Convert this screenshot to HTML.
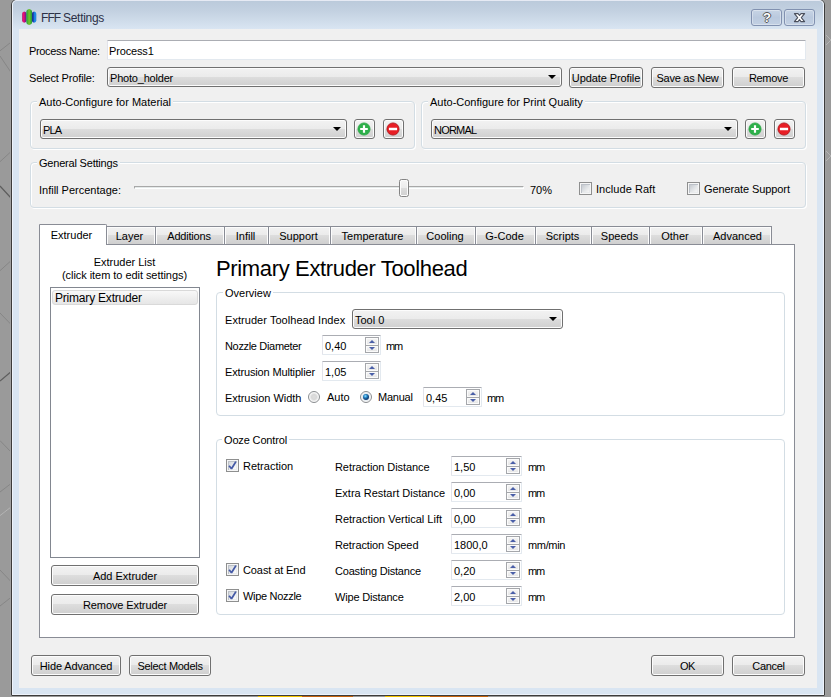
<!DOCTYPE html>
<html>
<head>
<meta charset="utf-8">
<title>FFF Settings</title>
<style>
html,body{margin:0;padding:0;}
body{width:831px;height:697px;overflow:hidden;background:#9a9a9a;position:relative;font-family:"Liberation Sans",sans-serif;font-size:11px;color:#000;line-height:13px;}
*{box-sizing:border-box;}
.a{position:absolute;white-space:nowrap;}
/* window frame */
#win{left:11px;top:-1px;width:814px;height:697px;border:1px solid #3c3c3c;border-radius:6px 6px 1px 1px;background:#d9e5f2;}
#winhl{left:12px;top:0;width:812px;height:695px;border:1px solid #eef3fb;border-top-color:#e6eaf4;border-radius:5px 5px 0 0;background:linear-gradient(#bbcadb 0px,#c3d1e1 10px,#cfdcea 20px,#d9e5f2 28px,#d9e5f2 100%);}
#content{left:19px;top:29px;width:798px;height:659px;background:#f0f0f0;}
#title{left:41px;top:11px;font-size:12px;line-height:14px;word-spacing:-0.6px;color:#2c3147;}
.cap{top:9px;height:17px;border:1px solid #8191b0;border-radius:3px;background:linear-gradient(#c7d4e5,#bac9de 50%,#c2d0e3);box-shadow:inset 0 0 0 1px rgba(255,255,255,.35);}
/* buttons */
.btn{border:1px solid #707070;border-radius:3px;background:linear-gradient(#f2f2f2 0%,#ebebeb 48%,#dddddd 50%,#cfcfcf 100%);box-shadow:inset 0 0 0 1px #fcfcfc;text-align:center;line-height:20px;}
.combo{border:1px solid #707070;border-radius:3px;background:linear-gradient(#f2f2f2 0%,#ebebeb 48%,#dddddd 50%,#cfcfcf 100%);box-shadow:inset 0 0 0 1px #fcfcfc;line-height:20px;padding-left:2px;}
.combo:after{content:"";position:absolute;right:5px;top:7px;border-left:4px solid transparent;border-right:4px solid transparent;border-top:4px solid #000;}
.grp{border:1px solid #d3dde4;border-radius:4px;box-shadow:1px 1px 0 #fff,inset 1px 1px 0 #fff;}
.leg{background:#f0f0f0;padding:0 2px;}
.legw{background:#fff;padding:0 2px;}
.edit{background:#fff;border:1px solid #e3e9ef;border-top-color:#abadb3;border-left-color:#e2e3ea;border-radius:1px;line-height:20px;padding-left:1px;}
.spin{background:#fff;border:1px solid #e3e9ef;border-top-color:#abadb3;border-left-color:#e2e3ea;border-radius:1px;line-height:20px;padding-left:2px;}
.spin i{position:absolute;right:1px;width:14px;border:1px solid #a5a7ab;background:linear-gradient(#f6f6f6,#e4e4e4);box-shadow:inset 0 0 0 1px #fbfbfb;}
.spin i.u{top:1px;height:9px;}
.spin i.d{top:10px;height:7px;border-top:none;}
.spin i.u:after{content:"";position:absolute;left:3px;top:2px;border-left:3px solid transparent;border-right:3px solid transparent;border-bottom:3px solid #4a5fa8;}
.spin i.d:after{content:"";position:absolute;left:3px;top:1px;border-left:3px solid transparent;border-right:3px solid transparent;border-top:3px solid #4a5fa8;}
.cb{width:13px;height:13px;border:1px solid #8e8f8f;background:linear-gradient(135deg,#c6cad0 18%,#dfe2e5 50%,#f5f5f5 80%);box-shadow:inset 0 0 0 1px #f6f6f6,inset 2px 2px 0 0 #bcc1c8,inset -2px -2px 0 0 #e9ebed;}
.cb.w{background:linear-gradient(135deg,#d4d8dd 18%,#e8eaec 50%,#fbfbfb 80%);}
.rd{width:12px;height:12px;border:1px solid #8a8d90;border-radius:50%;background:radial-gradient(circle at 50% 50%,#dedede 0,#d8d8d8 2.5px,#f0f0f0 4px,#fdfdfd 5px);}
.tab{top:226px;height:18px;padding-right:2px;border:1px solid #898c95;border-bottom:none;background:linear-gradient(#f2f2f2 0%,#ebebeb 48%,#dddddd 50%,#cfcfcf 100%);box-shadow:inset 1px 1px 0 #fcfcfc,inset -1px 0 0 #fcfcfc;text-align:center;line-height:19px;}
</style>
</head>
<body>
<svg class="a" style="left:0;top:0" width="831" height="697" viewBox="0 0 831 697">
<g stroke="#868686" stroke-width="1" fill="none">
<path d="M0 50.8L11 42.2M0 56L11 72.4M0 161.7L11 151.6M0 270.7L11 260.7M0 313L11 324.4M0 440.6L11 452M0 492L11 483.6M0 570L11 581.6M0 606L11 597.4"/>
</g>
<g stroke="#5e5e5e" stroke-width="1.2" fill="none"><path d="M0 186L11 198M0 381L11 371.7"/></g>
<g stroke="#b4b4b4" stroke-width="1" fill="none"><path d="M0 515.6L11 507M825 34L831 40M825 46L831 40M825 150L831 156M825 162L831 156"/></g>
<rect x="10" y="8" width="1" height="687" fill="#a0a0a0"/><rect x="825" y="8" width="1" height="687" fill="#a0a0a0"/>
<rect x="258" y="696" width="44" height="1" fill="#f5c400"/><rect x="302" y="696" width="51" height="1" fill="#c8650f"/>
<rect x="385" y="696" width="45" height="1" fill="#f5c400"/><rect x="430" y="696" width="58" height="1" fill="#c8650f"/>
</svg>
<div class="a" id="win"></div>
<div class="a" id="winhl"></div>
<div class="a" id="content"></div>

<!-- title bar -->
<svg class="a" style="left:22px;top:9px" width="15" height="17" viewBox="0 0 15 17">
<defs>
<linearGradient id="gp" x1="0" x2="1"><stop offset="0" stop-color="#b0207a"/><stop offset=".35" stop-color="#f0106c"/><stop offset=".7" stop-color="#a0148c"/><stop offset="1" stop-color="#4a1a8a"/></linearGradient>
<linearGradient id="gg" x1="0" x2="1"><stop offset="0" stop-color="#1e9a3c"/><stop offset=".5" stop-color="#78c428"/><stop offset="1" stop-color="#1e9a3c"/></linearGradient>
<linearGradient id="gb" x1="0" x2="1"><stop offset="0" stop-color="#1a1f96"/><stop offset=".3" stop-color="#1838b0"/><stop offset=".7" stop-color="#1c9cf0"/><stop offset="1" stop-color="#1a6ed0"/></linearGradient>
</defs>
<path d="M2.3 2.4Q4.5 2.8 4.5 4.8V11.4Q4.5 13.4 2.3 13.8Q0.1 13.4 0.1 11.4V4.8Q0.1 2.8 2.3 2.4Z" fill="url(#gp)"/>
<path d="M12.1 2.4Q14.3 2.8 14.3 4.8V11.4Q14.3 13.4 12.1 13.8Q9.9 13.4 9.9 11.4V4.8Q9.9 2.8 12.1 2.4Z" fill="url(#gb)"/>
<path d="M7.2 0Q10.1 0.6 10.1 3V12.9Q10.1 15.3 7.2 15.9Q4.3 15.3 4.3 12.9V3Q4.3 0.6 7.2 0Z" fill="url(#gg)"/>
</svg>
<div class="a" id="title"><span style="letter-spacing:-0.9px">FFF</span> <span style="letter-spacing:-0.3px">Settings</span></div>
<div class="a cap" style="left:751px;width:31px;"></div>
<div class="a cap" style="left:784px;width:31px;"></div>
<div class="a" style="left:751px;top:9px;width:31px;height:17px;text-align:center;font-weight:bold;font-size:13px;line-height:17px;padding-left:1px;color:#fff;text-shadow:-1px 0 #555,1px 0 #555,0 -1px #555,0 1px #555;">?</div>
<svg class="a" style="left:793px;top:12px" width="13" height="12" viewBox="0 0 13 12"><path d="M1.4 1.6h3.6l1.5 1.9 1.5-1.9h3.6l-3.3 4 3.3 4h-3.6l-1.5-1.9-1.5 1.9h-3.6l3.3-4z" fill="#fff" stroke="#4a4f5c" stroke-width="1.1" stroke-linejoin="round"/></svg>

<!-- row 1 -->
<div class="a" style="left:29px;top:45px;letter-spacing:-0.35px;">Process Name:</div>
<div class="a edit" style="left:107px;top:40px;width:699px;height:20px;letter-spacing:-0.15px;">Process1</div>
<!-- row 2 -->
<div class="a" style="left:29px;top:72px;letter-spacing:-0.15px;">Select Profile:</div>
<div class="a combo" style="left:107px;top:67px;width:455px;height:20px;letter-spacing:-0.2px;">Photo_holder</div>
<div class="a btn" style="left:569px;top:67px;width:74px;height:21px;letter-spacing:-0.1px;">Update Profile</div>
<div class="a btn" style="left:651px;top:67px;width:73px;height:21px;letter-spacing:-0.25px;">Save as New</div>
<div class="a btn" style="left:732px;top:67px;width:73px;height:21px;letter-spacing:-0.3px;">Remove</div>

<!-- group: material -->
<div class="a grp" style="left:30px;top:101px;width:385px;height:48px;"></div>
<div class="a leg" style="left:37px;top:96px;">Auto-Configure for Material</div>
<div class="a combo" style="left:40px;top:119px;width:307px;height:20px;"><span style="letter-spacing:-0.9px">PLA</span></div>
<div class="a btn" style="left:354px;top:119px;width:21px;height:20px;"></div>
<div class="a btn" style="left:383px;top:119px;width:21px;height:20px;"></div>
<svg class="a" style="left:357px;top:122px" width="15" height="15" viewBox="0 0 15 15"><circle cx="7" cy="7" r="6.1" fill="#2db04a" stroke="#2aa444" stroke-width=".8"/><path d="M7 3.2v7.6M3.2 7h7.6" stroke="#fff" stroke-width="2.2"/></svg>
<svg class="a" style="left:386px;top:122px" width="15" height="15" viewBox="0 0 15 15"><circle cx="7" cy="7" r="6.1" fill="#e81e25" stroke="#a81015" stroke-width=".8"/><path d="M2.9 7h8.2" stroke="#fff" stroke-width="2.5"/></svg>

<!-- group: quality -->
<div class="a grp" style="left:421px;top:101px;width:385px;height:48px;"></div>
<div class="a leg" style="left:428px;top:96px;">Auto-Configure for Print Quality</div>
<div class="a combo" style="left:431px;top:119px;width:307px;height:20px;"><span style="letter-spacing:-0.8px">NORMAL</span></div>
<div class="a btn" style="left:745px;top:119px;width:21px;height:20px;"></div>
<div class="a btn" style="left:774px;top:119px;width:21px;height:20px;"></div>
<svg class="a" style="left:748px;top:122px" width="15" height="15" viewBox="0 0 15 15"><circle cx="7" cy="7" r="6.1" fill="#2db04a" stroke="#2aa444" stroke-width=".8"/><path d="M7 3.2v7.6M3.2 7h7.6" stroke="#fff" stroke-width="2.2"/></svg>
<svg class="a" style="left:777px;top:122px" width="15" height="15" viewBox="0 0 15 15"><circle cx="7" cy="7" r="6.1" fill="#e81e25" stroke="#a81015" stroke-width=".8"/><path d="M2.9 7h8.2" stroke="#fff" stroke-width="2.5"/></svg>

<!-- group: general -->
<div class="a grp" style="left:30px;top:162px;width:776px;height:46px;"></div>
<div class="a leg" style="left:37px;top:157px;letter-spacing:-0.2px;">General Settings</div>
<div class="a" style="left:39px;top:184px;">Infill Percentage:</div>
<div class="a" style="left:134px;top:186px;width:390px;height:3px;border:1px solid #fff;border-top-color:#a8a8a8;border-left-color:#a8a8a8;background:#e4e9e9;"></div>
<div class="a" style="left:399px;top:179px;width:10px;height:18px;border:1px solid #848484;border-radius:2.5px;background:linear-gradient(#f5f5f5 0%,#ececec 48%,#dcdcdc 52%,#d0d0d0 100%);box-shadow:inset 0 0 0 1px #fbfbfb;"></div>
<div class="a" style="left:530px;top:184px;">70%</div>
<div class="a cb" style="left:579px;top:182px;"></div>
<div class="a" style="left:596px;top:183px;letter-spacing:0.05px;">Include Raft</div>
<div class="a cb" style="left:687px;top:182px;"></div>
<div class="a" style="left:704px;top:183px;letter-spacing:-0.1px;">Generate Support</div>

<!-- tabs -->
<div class="a" id="pane" style="left:39px;top:244px;width:756px;height:394px;background:#fff;border:1px solid #898c95;"></div>
<div class="a tab" style="left:106px;width:50px;padding-right:3px;">Layer</div>
<div class="a tab" style="left:155px;width:70px;letter-spacing:-0.2px;">Additions</div>
<div class="a tab" style="left:224px;width:45px;">Infill</div>
<div class="a tab" style="left:268px;width:63px;">Support</div>
<div class="a tab" style="left:330px;width:87px;">Temperature</div>
<div class="a tab" style="left:416px;width:60px;">Cooling</div>
<div class="a tab" style="left:475px;width:61px;">G-Code</div>
<div class="a tab" style="left:535px;width:57px;">Scripts</div>
<div class="a tab" style="left:591px;width:59px;">Speeds</div>
<div class="a tab" style="left:649px;width:54px;">Other</div>
<div class="a tab" style="left:702px;width:70px;padding-right:0;padding-left:1px;">Advanced</div>
<div class="a" style="left:39px;top:224px;width:68px;height:21px;border:1px solid #898c95;border-bottom:none;border-radius:1px 2px 0 0;background:#fff;text-align:center;line-height:20px;padding-right:3px;">Extruder</div>

<!-- left column -->
<div class="a" style="left:50px;top:256px;width:149px;text-align:center;">Extruder List</div>
<div class="a" style="left:50px;top:269px;width:149px;text-align:center;letter-spacing:-0.05px;">(click item to edit settings)</div>
<div class="a" style="left:50px;top:287px;width:150px;height:271px;background:#fff;border:1px solid #828790;"></div>
<div class="a" style="left:52px;top:290px;width:146px;height:15px;border:1px solid #d9d9d9;border-radius:3px;background:linear-gradient(#f8f8f8,#e6e6e6);font-size:12px;line-height:14px;padding-left:2px;letter-spacing:-0.2px;">Primary Extruder</div>
<div class="a btn" style="left:51px;top:565px;width:148px;height:21px;">Add Extruder</div>
<div class="a btn" style="left:51px;top:594px;width:148px;height:21px;letter-spacing:-0.1px;">Remove Extruder</div>

<!-- heading -->
<div class="a" style="left:216px;top:256px;font-size:22px;line-height:26px;letter-spacing:-0.35px;">Primary Extruder Toolhead</div>

<!-- overview group -->
<div class="a grp" style="left:216px;top:292px;width:569px;height:124px;"></div>
<div class="a legw" style="left:223px;top:287px;">Overview</div>
<div class="a" style="left:225px;top:314px;letter-spacing:0.05px;">Extruder Toolhead Index</div>
<div class="a combo" style="left:352px;top:309px;width:211px;height:20px;line-height:21px;">Tool 0</div>
<div class="a" style="left:225px;top:340px;letter-spacing:-0.33px;">Nozzle Diameter</div>
<div class="a spin" style="left:322px;top:335px;width:59px;height:20px;">0,40<i class="u"></i><i class="d"></i></div>
<div class="a" style="left:386px;top:340px;letter-spacing:-1.2px;">mm</div>
<div class="a" style="left:225px;top:366px;letter-spacing:-0.15px;">Extrusion Multiplier</div>
<div class="a spin" style="left:322px;top:361px;width:59px;height:20px;">1,05<i class="u"></i><i class="d"></i></div>
<div class="a" style="left:225px;top:392px;letter-spacing:-0.05px;">Extrusion Width</div>
<div class="a rd" style="left:308px;top:391px;"></div>
<div class="a" style="left:327px;top:391px;">Auto</div>
<div class="a rd" style="left:360px;top:391px;"></div>
<div class="a" style="left:363px;top:394px;width:6px;height:6px;border-radius:50%;background:radial-gradient(circle at 40% 35%,#9fe6ff 0,#2a8fd0 1.5px,#13467e 3px);box-shadow:0 0 0 1px #e8eef4;"></div>
<div class="a" style="left:378px;top:391px;letter-spacing:-0.25px;">Manual</div>
<div class="a spin" style="left:423px;top:387px;width:59px;height:20px;">0,45<i class="u"></i><i class="d"></i></div>
<div class="a" style="left:487px;top:392px;letter-spacing:-1.2px;">mm</div>

<!-- ooze group -->
<div class="a grp" style="left:216px;top:439px;width:569px;height:176px;"></div>
<div class="a legw" style="left:222px;top:434px;letter-spacing:-0.15px;">Ooze Control</div>
<div class="a" style="left:335px;top:461px;letter-spacing:-0.08px;">Retraction Distance</div>
<div class="a spin" style="left:451px;top:456px;width:71px;height:20px;">1,50<i class="u"></i><i class="d"></i></div>
<div class="a" style="left:528px;top:461px;letter-spacing:-1.2px;">mm</div>
<div class="a" style="left:335px;top:487px;">Extra Restart Distance</div>
<div class="a spin" style="left:451px;top:482px;width:71px;height:20px;">0,00<i class="u"></i><i class="d"></i></div>
<div class="a" style="left:528px;top:487px;letter-spacing:-1.2px;">mm</div>
<div class="a" style="left:335px;top:513px;">Retraction Vertical Lift</div>
<div class="a spin" style="left:451px;top:508px;width:71px;height:20px;">0,00<i class="u"></i><i class="d"></i></div>
<div class="a" style="left:528px;top:513px;letter-spacing:-1.2px;">mm</div>
<div class="a" style="left:335px;top:539px;letter-spacing:-0.1px;">Retraction Speed</div>
<div class="a spin" style="left:451px;top:534px;width:71px;height:20px;">1800,0<i class="u"></i><i class="d"></i></div>
<div class="a" style="left:528px;top:539px;letter-spacing:-0.35px;">mm/min</div>
<div class="a" style="left:335px;top:565px;letter-spacing:-0.2px;">Coasting Distance</div>
<div class="a spin" style="left:451px;top:560px;width:71px;height:20px;">0,20<i class="u"></i><i class="d"></i></div>
<div class="a" style="left:528px;top:565px;letter-spacing:-1.2px;">mm</div>
<div class="a" style="left:335px;top:591px;letter-spacing:-0.18px;">Wipe Distance</div>
<div class="a spin" style="left:451px;top:586px;width:71px;height:20px;">2,00<i class="u"></i><i class="d"></i></div>
<div class="a" style="left:528px;top:591px;letter-spacing:-1.2px;">mm</div>
<div class="a cb w" style="left:226px;top:459px;"></div>
<svg class="a" style="left:228px;top:461px" width="9" height="10" viewBox="0 0 9 10"><path d="M1.1 4.8L3.5 7.7 7.9 0.6" fill="none" stroke="#4459a6" stroke-width="1.8" stroke-linejoin="bevel"/></svg>
<div class="a" style="left:243px;top:460px;">Retraction</div>
<div class="a cb w" style="left:226px;top:563px;"></div>
<svg class="a" style="left:228px;top:565px" width="9" height="10" viewBox="0 0 9 10"><path d="M1.1 4.8L3.5 7.7 7.9 0.6" fill="none" stroke="#4459a6" stroke-width="1.8" stroke-linejoin="bevel"/></svg>
<div class="a" style="left:243px;top:564px;letter-spacing:-0.1px;">Coast at End</div>
<div class="a cb w" style="left:226px;top:589px;"></div>
<svg class="a" style="left:228px;top:591px" width="9" height="10" viewBox="0 0 9 10"><path d="M1.1 4.8L3.5 7.7 7.9 0.6" fill="none" stroke="#4459a6" stroke-width="1.8" stroke-linejoin="bevel"/></svg>
<div class="a" style="left:243px;top:590px;letter-spacing:-0.3px;">Wipe Nozzle</div>

<!-- bottom buttons -->
<div class="a btn" style="left:31px;top:655px;width:90px;height:21px;letter-spacing:-0.12px;">Hide Advanced</div>
<div class="a btn" style="left:129px;top:655px;width:82px;height:21px;letter-spacing:-0.3px;">Select Models</div>
<div class="a btn" style="left:651px;top:655px;width:73px;height:21px;letter-spacing:-0.5px;">OK</div>
<div class="a btn" style="left:732px;top:655px;width:73px;height:21px;letter-spacing:-0.3px;">Cancel</div>

</body>
</html>
